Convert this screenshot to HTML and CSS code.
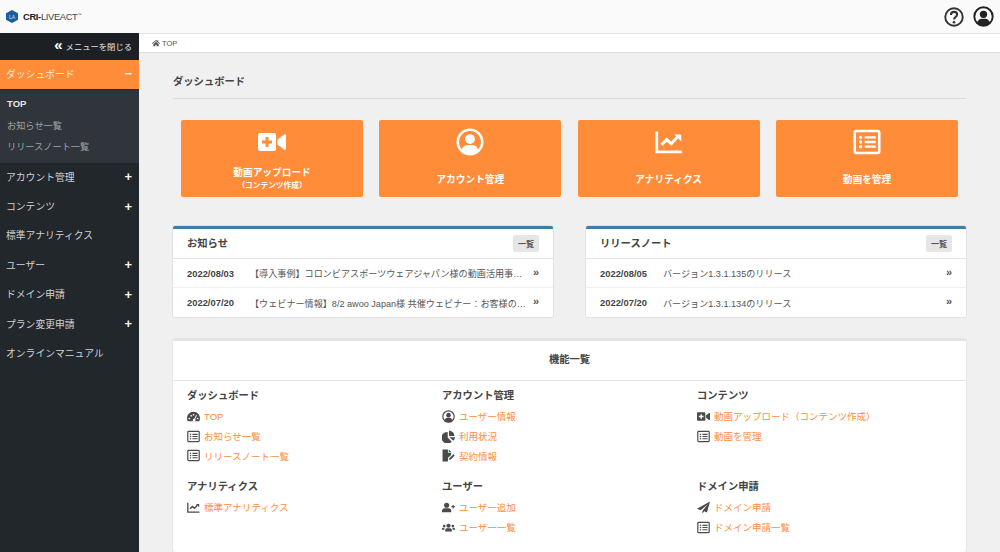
FILE: index.html
```html
<!DOCTYPE html>
<html lang="ja">
<head>
<meta charset="utf-8">
<title>CRI-LIVEACT</title>
<link rel="stylesheet" href="styles.css">
</head>
<body>
<svg class="defs" width="0" height="0" aria-hidden="true">
  <symbol id="i-list" viewBox="0 0 24 24">
    <rect x="1.5" y="2.5" width="21" height="19" rx="1.5" fill="none" stroke="currentColor" stroke-width="2.200"/>
    <circle cx="6.5" cy="8" r="1.4" fill="currentColor"/><circle cx="6.5" cy="12" r="1.4" fill="currentColor"/><circle cx="6.5" cy="16" r="1.4" fill="currentColor"/>
    <path d="M10 8h9.500M10 12h9.500M10 16h9.500" stroke="currentColor" stroke-width="2"/>
  </symbol>
  <symbol id="i-user" viewBox="0 0 24 24">
    <circle cx="12" cy="12" r="10.500" fill="none" stroke="currentColor" stroke-width="2.200"/>
    <circle cx="12" cy="9.500" r="4.200" fill="currentColor"/>
    <path d="M4.500 19.300c1-3.300 3.500-4.800 5-4.800h5c1.500 0 4 1.500 5 4.800A10.400 10.400 0 0 1 12 22.500a10.400 10.400 0 0 1-7.500-3.200z" fill="currentColor"/>
  </symbol>
  <symbol id="i-chart" viewBox="0 0 24 24">
    <path d="M1.500 3v17.500H23" fill="none" stroke="currentColor" stroke-width="2.400"/>
    <path d="M5.500 14.500l4.500-4.500 4 3.500 5-5.500" fill="none" stroke="currentColor" stroke-width="2.600"/>
    <path d="M16.500 5.500h6v6z" fill="currentColor"/>
  </symbol>
  <symbol id="i-video" viewBox="0 0 28 24">
    <path fill-rule="evenodd" d="M2 3h14a2 2 0 0 1 2 2v14a2 2 0 0 1-2 2H2a2 2 0 0 1-2-2V5a2 2 0 0 1 2-2zm5.500 4v3.500H4v3h3.500V17h3v-3.500H14v-3h-3.500V7z" fill="currentColor"/>
    <path d="M19.500 9.500L26 4.500c1-.7 2 0 2 1v13c0 1-1 1.700-2 1l-6.500-5z" fill="currentColor"/>
  </symbol>
  <symbol id="i-gauge" viewBox="0 0 28 24">
    <path fill-rule="evenodd" d="M14 2C6.300 2 0 8.300 0 16c0 2.300.6 4.300 1.600 6h24.800c1-1.700 1.600-3.700 1.600-6C28 8.300 21.700 2 14 2zM5 14.500a1.800 1.800 0 1 1 0 3.600 1.800 1.800 0 0 1 0-3.600zm4-6a1.800 1.800 0 1 1 0 3.600 1.800 1.800 0 0 1 0-3.600zm5-2a1.800 1.800 0 1 1 0 3.600 1.800 1.800 0 0 1 0-3.600zm5.800 2.200l1.800 1-4 7.800a3 3 0 1 1-2-.9zM23 14.500a1.800 1.800 0 1 1 0 3.600 1.800 1.800 0 0 1 0-3.600z" fill="currentColor"/>
  </symbol>
  <symbol id="i-pie" viewBox="0 0 24 24">
    <path d="M10.500 3.500v10.500l7.500 7.500A10.800 10.800 0 1 1 10.500 3.500z" fill="currentColor"/>
    <path d="M13 1a10.500 10.500 0 0 1 10 10H13z" fill="currentColor"/>
    <path d="M13.500 13.500H24a10.500 10.500 0 0 1-3 6.500z" fill="currentColor"/>
  </symbol>
  <symbol id="i-sign" viewBox="0 0 24 24">
    <path d="M1 1h10v6h6v3.500l-6 6V23H1z" fill="currentColor"/>
    <path d="M12.500 1l4.500 4.500h-4.500z" fill="currentColor"/>
    <path d="M13 17.500L21 9.500l2.500 2.500-8 8H13z" fill="currentColor"/>
  </symbol>
  <symbol id="i-uplus" viewBox="0 0 28 24">
    <circle cx="10" cy="7" r="5.500" fill="currentColor"/>
    <path d="M0 22v-3c0-3 2.500-5.500 5.500-5.500h9c3 0 5.500 2.500 5.500 5.500v3z" fill="currentColor"/>
    <path d="M24 6.500v7.500M20.500 10.200h7" stroke="currentColor" stroke-width="2.400"/>
  </symbol>
  <symbol id="i-users" viewBox="0 0 30 24">
    <circle cx="15" cy="8" r="4.800" fill="currentColor"/>
    <path d="M7.500 21v-2.500c0-3 2-4.500 4-4.500h7c2 0 4 1.500 4 4.500V21z" fill="currentColor"/>
    <circle cx="5" cy="8.500" r="3" fill="currentColor"/><circle cx="25" cy="8.500" r="3" fill="currentColor"/>
    <path d="M0 17v-1.500c0-2 1.500-3 3-3h3.500c-1 1-1.500 3-1.500 4.500zM30 17v-1.500c0-2-1.500-3-3-3h-3.500c1 1 1.500 3 1.500 4.500z" fill="currentColor"/>
  </symbol>
  <symbol id="i-plane" viewBox="0 0 24 24">
    <path d="M24 1L0 14.500l6.500 2.700L20 6 10 18.500v4.500l3.500-4 5 2z" fill="currentColor"/>
  </symbol>
  <symbol id="i-home" viewBox="0 0 24 24">
    <path d="M12 3L0 13l1.500 1.700L12 6l10.500 8.700L24 13l-5-4.200V4h-3v2.300zM4 15.500V22h6v-5h4v5h6v-6.500L12 8.500z" fill="currentColor"/>
  </symbol>
  <symbol id="i-help" viewBox="0 0 24 24">
    <circle cx="12" cy="12" r="10.500" fill="none" stroke="currentColor" stroke-width="2.300"/>
    <path d="M8.300 9.500c0-2.300 1.700-3.700 3.800-3.700s3.700 1.400 3.700 3.300c0 3-3.800 2.900-3.800 6" fill="none" stroke="currentColor" stroke-width="2.500"/>
    <circle cx="12" cy="18.300" r="1.600" fill="currentColor"/>
  </symbol>
</svg>

<header class="topbar">
  <div class="logo">
    <svg class="logo-mark" viewBox="0 0 24 26" aria-hidden="true"><path d="M12 0l12 6.500v13L12 26 0 19.500v-13z" fill="#1b5f9e"/></svg>
    <span class="logo-la">LA</span>
    <span class="logo-text"><b>CRI-</b>LIVEACT<sup>™</sup></span>
  </div>
  <div class="top-icons">
    <svg class="top-icon"><use href="#i-help"/></svg>
    <svg class="top-icon top-icon-user"><use href="#i-user"/></svg>
  </div>
</header>

<div class="layout">
  <aside class="sidebar">
    <div class="close-row"><span class="close-arrows">«</span>メニューを閉じる</div>
    <div class="nav-item nav-active"><span>ダッシュボード</span><span class="nav-sign">−</span></div>
    <ul class="subnav">
      <li class="subnav-current">TOP</li>
      <li>お知らせ一覧</li>
      <li>リリースノート一覧</li>
    </ul>
    <div class="nav-item"><span>アカウント管理</span><span class="nav-sign">+</span></div>
    <div class="nav-item"><span>コンテンツ</span><span class="nav-sign">+</span></div>
    <div class="nav-item"><span>標準アナリティクス</span></div>
    <div class="nav-item"><span>ユーザー</span><span class="nav-sign">+</span></div>
    <div class="nav-item"><span>ドメイン申請</span><span class="nav-sign">+</span></div>
    <div class="nav-item"><span>プラン変更申請</span><span class="nav-sign">+</span></div>
    <div class="nav-item"><span>オンラインマニュアル</span></div>
  </aside>

  <main class="main">
    <div class="breadcrumb"><svg class="crumb-icon"><use href="#i-home"/></svg>TOP</div>
    <div class="content">
      <h1 class="page-title">ダッシュボード</h1>

      <div class="cards">
        <a class="card"><svg class="card-icon card-icon-video"><use href="#i-video"/></svg><span class="card-label">動画アップロード<small>（コンテンツ作成）</small></span></a>
        <a class="card"><svg class="card-icon"><use href="#i-user"/></svg><span class="card-label">アカウント管理</span></a>
        <a class="card"><svg class="card-icon"><use href="#i-chart"/></svg><span class="card-label">アナリティクス</span></a>
        <a class="card"><svg class="card-icon"><use href="#i-list"/></svg><span class="card-label">動画を管理</span></a>
      </div>

      <div class="panels">
        <section class="panel">
          <div class="panel-head"><h2>お知らせ</h2><span class="btn">一覧</span></div>
          <div class="panel-row"><span class="date">2022/08/03</span><span class="row-text">【導入事例】コロンビアスポーツウェアジャパン様の動画活用事…</span><span class="row-arrow">»</span></div>
          <div class="panel-row"><span class="date">2022/07/20</span><span class="row-text">【ウェビナー情報】8/2 awoo Japan様 共催ウェビナー：お客様の…</span><span class="row-arrow">»</span></div>
        </section>
        <section class="panel">
          <div class="panel-head"><h2>リリースノート</h2><span class="btn">一覧</span></div>
          <div class="panel-row"><span class="date">2022/08/05</span><span class="row-text">バージョン1.3.1.135のリリース</span><span class="row-arrow">»</span></div>
          <div class="panel-row"><span class="date">2022/07/20</span><span class="row-text">バージョン1.3.1.134のリリース</span><span class="row-arrow">»</span></div>
        </section>
      </div>

      <section class="features">
        <h2 class="features-title">機能一覧</h2>
        <div class="features-grid">
          <div class="group">
            <h3>ダッシュボード</h3>
            <a class="flink"><svg class="ficon"><use href="#i-gauge"/></svg>TOP</a>
            <a class="flink"><svg class="ficon"><use href="#i-list"/></svg>お知らせ一覧</a>
            <a class="flink"><svg class="ficon"><use href="#i-list"/></svg>リリースノート一覧</a>
          </div>
          <div class="group">
            <h3>アカウント管理</h3>
            <a class="flink"><svg class="ficon"><use href="#i-user"/></svg>ユーザー情報</a>
            <a class="flink"><svg class="ficon"><use href="#i-pie"/></svg>利用状況</a>
            <a class="flink"><svg class="ficon"><use href="#i-sign"/></svg>契約情報</a>
          </div>
          <div class="group">
            <h3>コンテンツ</h3>
            <a class="flink"><svg class="ficon"><use href="#i-video"/></svg>動画アップロード（コンテンツ作成）</a>
            <a class="flink"><svg class="ficon"><use href="#i-list"/></svg>動画を管理</a>
          </div>
          <div class="group">
            <h3>アナリティクス</h3>
            <a class="flink"><svg class="ficon"><use href="#i-chart"/></svg>標準アナリティクス</a>
          </div>
          <div class="group">
            <h3>ユーザー</h3>
            <a class="flink"><svg class="ficon"><use href="#i-uplus"/></svg>ユーザー追加</a>
            <a class="flink"><svg class="ficon"><use href="#i-users"/></svg>ユーザー一覧</a>
          </div>
          <div class="group">
            <h3>ドメイン申請</h3>
            <a class="flink"><svg class="ficon"><use href="#i-plane"/></svg>ドメイン申請</a>
            <a class="flink"><svg class="ficon"><use href="#i-list"/></svg>ドメイン申請一覧</a>
          </div>
        </div>
      </section>
    </div>
  </main>
</div>
</body>
</html>
```

FILE: styles.css
```css
* { box-sizing: border-box; }
html, body { height: 100%; }
body {
  margin: 0;
  height: 552px;
  overflow: hidden;
  font-family: "Liberation Sans", "Noto Sans CJK JP", sans-serif;
  color: #444;
  background: #f0f0f0;
  font-size: 10px;
}
h1, h2, h3, ul { margin: 0; padding: 0; }
.defs { display: block; width: 0; height: 0; overflow: hidden; }

/* Top bar */
.topbar {
  height: 33px;
  display: flex;
  align-items: center;
  justify-content: space-between;
  padding: 0 6px;
  background: #fafafa;
}
.logo { display: flex; align-items: center; position: relative; }
.logo-mark { width: 12px; height: 13px; margin-right: 5px; }
.logo-la {
  position: absolute;
  left: 2px;
  top: 50%;
  transform: translateY(-50%);
  width: 8px;
  font-size: 5px;
  line-height: 6px;
  text-align: center;
  color: #cfe2f3;
}
.logo-text { font-size: 9.400px; color: #444; letter-spacing: -0.350px; }
.logo-text b { font-weight: 700; color: #222; }
.logo-text sup { font-size: 4px; vertical-align: top; line-height: 8px; }
.top-icons { display: flex; align-items: center; gap: 9px; }
.top-icon { width: 20px; height: 20px; color: #333; display: block; }
.top-icon-user { width: 21px; height: 21px; color: #222; }

/* Shell */
.layout { display: flex; height: 519px; }
.sidebar {
  width: 139px;
  flex: none;
  background: #22272c;
  color: #cfd2d4;
}
.main { flex: 1; min-width: 0; display: flex; flex-direction: column; }

/* Sidebar */
.close-row {
  height: 27px;
  display: flex;
  align-items: center;
  justify-content: flex-end;
  padding: 0 7px 2px 0;
  background: #1c2024;
  color: #e3e4e5;
  font-size: 8.300px;
}
.close-arrows { font-size: 15px; font-weight: 700; line-height: 1; margin: -3px 3px 0 0; color: #fff; }
.nav-item {
  height: 29.400px;
  display: flex;
  align-items: center;
  justify-content: space-between;
  padding: 0 7px 2px 6px;
  font-size: 9.800px;
}
.nav-active {
  height: 29px;
  background: #ff8c38;
  color: #ffe9d8;
  box-shadow: 0 1px 1px rgba(0,0,0,.25);
  position: relative;
}
.nav-sign { font-size: 13px; font-weight: 700; color: #f4f4f4; line-height: 1; }
.subnav {
  list-style: none;
  height: 74px;
  padding: 4px 0 0 7px;
  background: #2f353b;
  color: #9fa3a6;
  font-size: 9.200px;
}
.subnav li { height: 21px; line-height: 21px; }
.subnav-current { color: #e6e7e8; font-weight: 700; font-size: 9.500px; margin-bottom: 1.500px; }

/* Breadcrumb */
.breadcrumb {
  height: 20px;
  flex: none;
  display: flex;
  align-items: center;
  padding-left: 13px;
  background: #fff;
  border-bottom: 1px solid #dedede;
  border-top: 1px solid #e4e4e4;
  font-size: 7.500px;
  color: #555;
}
.crumb-icon { width: 8px; height: 8px; margin-right: 2px; color: #555; }

/* Content */
.content { padding: 0 34px; flex: 1; min-height: 0; }
.page-title {
  height: 46px;
  padding-top: 20px;
  font-size: 10.300px;
  line-height: 17px;
  font-weight: 700;
  color: #444;
  border-bottom: 1px solid #dcdcdc;
  margin-bottom: 21px;
}
.cards { display: flex; gap: 16.300px; padding: 0 8px; margin-bottom: 29px; }
.card {
  flex: 1;
  height: 77px;
  background: #ff8c38;
  border-radius: 2px;
  color: #fff;
  display: flex;
  flex-direction: column;
  align-items: center;
  padding-top: 8px;
}
.card-icon { width: 28px; height: 28px; display: block; flex: none; }
.card-icon-video { margin-top: 0; }
.card-label {
  flex: 1;
  display: flex;
  flex-direction: column;
  align-items: center;
  justify-content: center;
  font-size: 9.700px;
  font-weight: 700;
  line-height: 13px;
  padding-top: 6px;
}
.card-label small { font-size: 7.700px; line-height: 14px; font-weight: 700; }

.panels { display: flex; gap: 33px; margin-bottom: 22px; }
.panel {
  flex: 1;
  min-width: 0;
  background: #fff;
  border-top: 3px solid #3f7ca8;
  border-radius: 2px;
  box-shadow: 0 0 0 1px #e2e2e2;
  height: 91px;
}
.panel-head {
  height: 30px;
  display: flex;
  align-items: center;
  justify-content: space-between;
  padding: 0 14px;
  border-bottom: 1px solid #e4e4e4;
}
.panel-head h2 { font-size: 10.300px; font-weight: 700; color: #444; margin-top: -2px; }
.btn {
  width: 26px;
  height: 17px;
  background: #e6e6e6;
  border-radius: 2px;
  color: #555;
  font-size: 8px;
  font-weight: 700;
  display: flex;
  align-items: center;
  justify-content: center;
}
.panel-row {
  height: 29px;
  display: flex;
  align-items: center;
  padding: 0 14px;
  border-bottom: 1px solid #efefef;
  font-size: 9.100px;
  color: #555;
}
.panel-row:last-child { border-bottom: 0; }
.date { width: 63px; flex: none; font-weight: 700; color: #444; font-size: 9.400px; }
.row-text { flex: 1; min-width: 0; white-space: nowrap; }
.row-arrow { flex: none; width: 18px; text-align: right; font-weight: 700; font-size: 11px; line-height: 1; color: #555; margin-top: -2px; }

.features {
  background: #fff;
  border-top: 2px solid #e2e2e2;
  box-shadow: 0 0 0 1px #e6e6e6;
  border-radius: 2px;
  height: 213px;
}
.features-title {
  height: 40px;
  line-height: 38px;
  text-align: center;
  font-size: 10.300px;
  font-weight: 700;
  color: #444;
  border-bottom: 1px solid #e4e4e4;
}
.features-grid {
  display: grid;
  grid-template-columns: repeat(3, 255px);
  grid-auto-rows: 91px;
  padding: 6px 0 0 14px;
}
.group h3 {
  font-size: 10.300px;
  font-weight: 700;
  color: #444;
  line-height: 18px;
  margin-bottom: 1.500px;
}
.flink {
  display: flex;
  align-items: center;
  height: 19.700px;
  font-size: 9.500px;
  color: #ff8c3c;
}
.ficon { width: 13px; height: 13px; margin-right: 4px; color: #4a4a4a; flex: none; display: block; }
```
